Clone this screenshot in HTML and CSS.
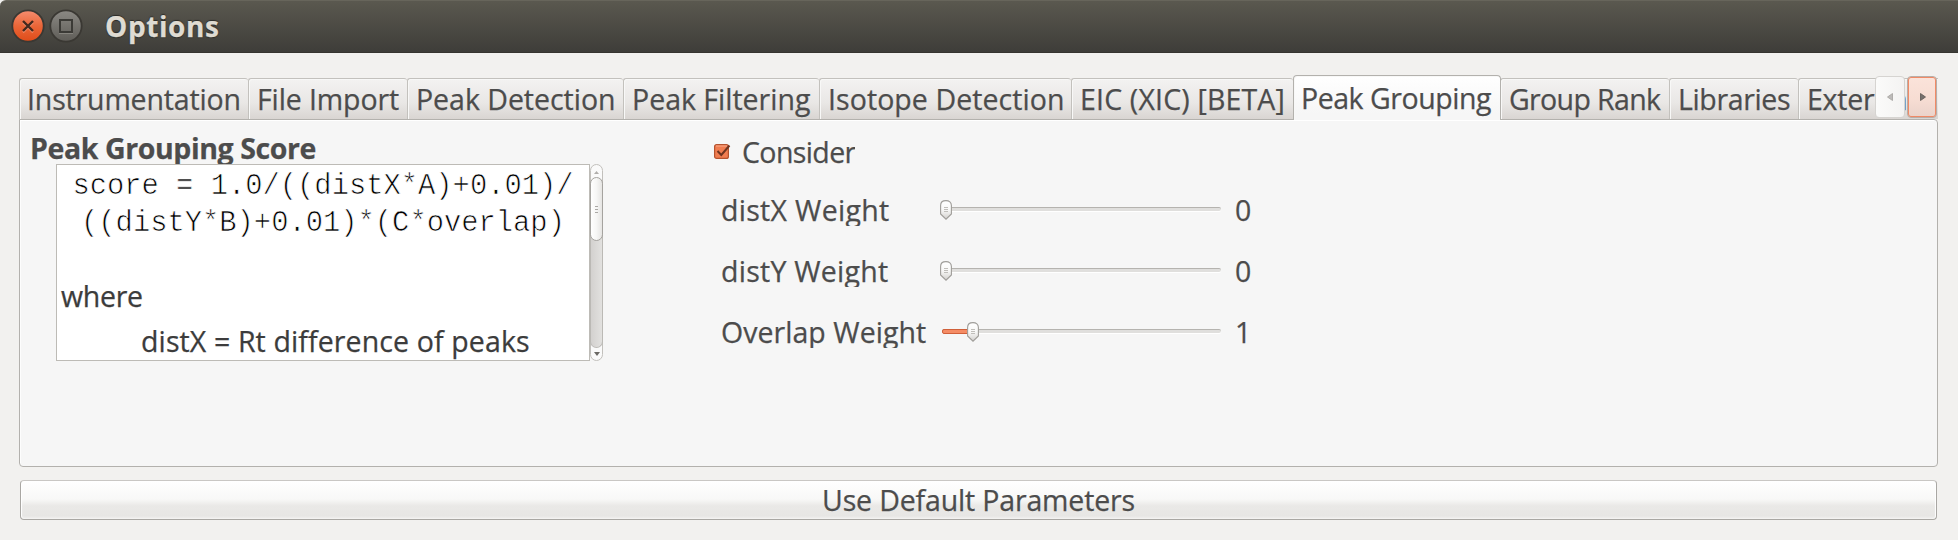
FILE: index.html
```
<!DOCTYPE html>
<html lang="en">
<head>
<meta charset="utf-8">
<title>Options</title>
<link rel="stylesheet" href="styles.css">
</head>
<body>
<svg class="defs" width="0" height="0" aria-hidden="true">
  <defs>
    <linearGradient id="close-fill" x1="0" y1="0" x2="0" y2="1"><stop offset="0" stop-color="#f58d70"/><stop offset=".5" stop-color="#ea6638"/><stop offset="1" stop-color="#df4b18"/></linearGradient>
    <linearGradient id="max-fill" x1="0" y1="0" x2="0" y2="1"><stop offset="0" stop-color="#8b8984"/><stop offset="1" stop-color="#5e5c57"/></linearGradient>
    <linearGradient id="knob-fill" x1="0" y1="0" x2="0" y2="1"><stop offset="0" stop-color="#ffffff"/><stop offset=".5" stop-color="#f8f8f7"/><stop offset="1" stop-color="#d2d0cd"/></linearGradient>
    <symbol id="knob" viewBox="0 0 12 20">
      <path d="M.6 5.500C.6 2.400 2.800.6 6 .6s5.400 1.800 5.400 4.900V14L6 19.200.6 14Z" fill="url(#knob-fill)" stroke="#9f9d99" stroke-width="1.100"/>
      <path d="M4 7.500h4M4 9.500h4M4 11.500h4" stroke="#c0beba" stroke-width="1"/>
    </symbol>
  </defs>
</svg>
<header class="titlebar">
  <svg class="window-buttons" width="74" height="36" viewBox="0 0 74 36">
    <circle cx="18" cy="18" r="15.700" fill="url(#close-fill)" stroke="#3a3833" stroke-width="1.800"/>
    <path d="M13 14.500l10 10M23 14.500l-10 10" stroke="#f39a7c" stroke-width="2" opacity=".7"/>
    <path d="M13 13l10 10M23 13l-10 10" stroke="#44291e" stroke-width="2.400"/>
    <circle cx="56" cy="18" r="15.700" fill="url(#max-fill)" stroke="#3a3833" stroke-width="1.800"/>
    <path d="M49 25.500h14" stroke="#86847e" stroke-width="1"/>
    <rect x="50" y="12" width="12" height="12" fill="none" stroke="#3b3a36" stroke-width="2"/>
  </svg>
  <h1 class="window-title">Options</h1>
</header>
<main class="content">
  <nav class="tabs">
    <div class="tab tab-instrumentation">Instrumentation</div>
    <div class="tab tab-import">File Import</div>
    <div class="tab tab-detection">Peak Detection</div>
    <div class="tab tab-filtering">Peak Filtering</div>
    <div class="tab tab-isotope">Isotope Detection</div>
    <div class="tab tab-eic">EIC (XIC) [BETA]</div>
    <div class="tab tab-grouping active">Peak Grouping</div>
    <div class="tab tab-rank">Group Rank</div>
    <div class="tab tab-libraries">Libraries</div>
    <div class="tab tab-external">External P</div>
    <div class="scrollers">
      <button class="scroller disabled"><svg width="6" height="8" viewBox="0 0 6 8"><path d="M5.500.5v7L.5 4Z" fill="#bdbbb9" stroke="#a3a19e" stroke-width=".8"/></svg></button>
      <button class="scroller hot"><svg width="6" height="8" viewBox="0 0 6 8"><path d="M.5.5v7l5-3.500Z" fill="#77716e" stroke="#5c5552" stroke-width=".8"/></svg></button>
    </div>
  </nav>
  <section class="panel">
    <div class="score">
      <h2 class="heading">Peak Grouping Score</h2>
      <div class="formula">
        <div class="formula-text">
          <p class="code">score = 1.0/((distX*A)+0.01)/</p>
          <p class="code">((distY*B)+0.01)*(C*overlap)</p>
          <p class="where">where</p>
          <p class="definition">distX = Rt difference of peaks</p>
        </div>
        <div class="scrollbar">
          <svg class="arrow arrow-up" width="5" height="3" viewBox="0 0 5 3"><path d="M0 3L2.500 0 5 3Z" fill="#b0aeab"/></svg>
          <div class="thumb"><i></i><i></i><i></i></div>
          <div class="trough"></div>
          <svg class="arrow arrow-down" width="6" height="4" viewBox="0 0 6 4"><path d="M0 0h6L3 4Z" fill="#6b6965"/></svg>
        </div>
      </div>
    </div>
    <div class="weights">
      <div class="consider">
        <svg width="17" height="17" viewBox="0 0 17 17">
          <rect x=".6" y="1.600" width="13.800" height="13.800" rx="2" fill="#f07d51" stroke="#b5532f" stroke-width="1.200"/>
          <path d="M2 3h11" stroke="#f8a98b" stroke-width="1"/>
          <path d="M3.500 8l3.800 4L15.500 2.500" fill="none" stroke="#6e3420" stroke-width="2"/>
        </svg>
        <span class="consider-label">Consider</span>
      </div>
      <div class="row">
        <span class="label label-x">distX Weight</span>
        <div class="slider"><div class="groove"></div><svg class="knob" width="12" height="20"><use href="#knob"/></svg></div>
        <span class="value">0</span>
      </div>
      <div class="row">
        <span class="label label-y">distY Weight</span>
        <div class="slider"><div class="groove"></div><svg class="knob" width="12" height="20"><use href="#knob"/></svg></div>
        <span class="value">0</span>
      </div>
      <div class="row">
        <span class="label label-overlap">Overlap Weight</span>
        <div class="slider"><div class="groove"></div><div class="fill"></div><svg class="knob knob-one" width="12" height="20"><use href="#knob"/></svg></div>
        <span class="value">1</span>
      </div>
    </div>
  </section>
  <button class="defaults">Use Default Parameters</button>
</main>
</body>
</html>
```
FILE: styles.css
```
* { box-sizing: border-box; }
body {
  margin: 0;
  width: 1958px;
  height: 540px;
  overflow: hidden;
  background: #f2f1ef;
  color: #4c4c4c;
  font-family: "Open Sans", "Noto Sans", sans-serif;
  font-size: 28.5px;
  white-space: nowrap;
  -webkit-text-stroke: .25px currentColor;
}
h1, h2, p { margin: 0; font-size: inherit; font-weight: inherit; }
button { font: inherit; color: inherit; }
svg { display: block; flex: none; }
.defs { position: absolute; }

.titlebar {
  display: flex;
  height: 53px;
  padding-left: 10px;
  border-top: 1px solid #67655b;
  border-bottom: 1px solid #363530;
  border-top-left-radius: 6px;
  background: linear-gradient(#5a584f, #3e3d39);
}
.window-buttons { margin-top: 7px; }
.window-title {
  margin-left: 21px;
  font-size: 28px;
  font-weight: bold;
  line-height: 50px;
  letter-spacing: .6px;
  color: #dfdbd2;
  text-shadow: 0 -1px 1px #2c2b28, 0 1px 1px #2c2b28;
}

.content { padding: 22px 20px 0 19px; }
.tabs {
  position: relative;
  z-index: 1;
  display: flex;
  align-items: flex-end;
  width: 1919px;
  height: 44px;
}
.tab {
  flex: none;
  height: 41px;
  padding-left: 8px;
  border: 1px solid #c3c1bd;
  border-width: 1px 0 0 1px;
  border-radius: 3px 3px 0 0;
  line-height: 40px;
  background: linear-gradient(#f3f2f1, #e9e7e5 60%, #d9d5d2);
  box-shadow: inset 1px 1px 0 #f8f8f7;
}
.tab.active {
  position: relative;
  height: 45px;
  margin: 0 -1px -1px 0;
  padding-left: 7px;
  border-color: #b3b1ad;
  border-right-width: 1px;
  border-radius: 4px 4px 0 0;
  line-height: 44px;
  background: linear-gradient(#fff, #f6f6f6 85%);
}
.tab-instrumentation { width: 229px; padding-left: 7px; letter-spacing: -.155px; }
.tab-import { width: 159px; letter-spacing: -.108px; }
.tab-detection { width: 216px; letter-spacing: -.027px; }
.tab-filtering { width: 196px; }
.tab-isotope { width: 252px; letter-spacing: .073px; }
.tab-eic { width: 222px; letter-spacing: .165px; }
.tab-grouping { width: 208px; letter-spacing: -.455px; }
.tab-rank { width: 169px; letter-spacing: -.637px; }
.tab-libraries { width: 129px; letter-spacing: -.355px; }
.tab-external {
  width: 140px;
  overflow: hidden;
  border-top-right-radius: 0;
  letter-spacing: -.229px;
  word-spacing: -4px;
}
.scrollers {
  position: absolute;
  right: 1px;
  top: 1px;
  display: flex;
  gap: 2px;
}
.scroller {
  display: flex;
  align-items: center;
  justify-content: center;
  width: 30px;
  height: 42px;
  padding: 0;
  border: 1px solid #d6d4d1;
  border-radius: 4px;
  background: linear-gradient(90deg, #fbfbfa, #f4f3f2);
}
.scroller.hot {
  border-color: #b9aea8;
  background: linear-gradient(#fbe3da, #f7ddd3 55%, #ead3ca);
  box-shadow: inset 0 0 0 1px #f08a66;
}
.hot svg { margin-left: 2px; }

.panel {
  display: flex;
  width: 1919px;
  height: 348px;
  border: 1px solid #b3b1ad;
  border-radius: 0 4px 4px 4px;
  background: #f6f6f6;
  box-shadow: inset 0 1px 0 #fff, inset 1px 0 0 #fdfdfd;
}
.score { width: 583px; padding-left: 9px; }
.heading {
  height: 44px;
  padding: 8px 0 0 1px;
  font-weight: bold;
  line-height: 40px;
  letter-spacing: -.41px;
}
.formula { display: flex; height: 197px; margin-left: 27px; }
.formula-text {
  width: 534px;
  padding: 3px 0 0 4px;
  overflow: hidden;
  border: 1px solid #bdbbb6;
  background: #fff;
  color: #3c3c3c;
}
.code {
  margin-left: -4px;
  text-align: center;
  font: 28.8px/37px "Liberation Mono", monospace;
  color: #000;
  -webkit-text-stroke: .7px #fff;
}
.where { margin-top: 35px; line-height: 38px; letter-spacing: -.3px; }
.definition { margin-top: 7px; padding-left: 80px; line-height: 38px; letter-spacing: .122px; }

.scrollbar {
  display: flex;
  flex-direction: column;
  align-items: center;
  width: 13px;
  height: 197px;
  border: 1px solid #c2c0bc;
  border-radius: 7px;
  background: #fafafa;
}
.arrow-up { margin: 6px 0 3px; }
.thumb {
  position: relative;
  display: flex;
  flex-direction: column;
  align-items: center;
  justify-content: center;
  gap: 2px;
  flex: none;
  width: 13px;
  height: 64px;
  border: 1px solid #a5a39f;
  border-radius: 7px;
  background: linear-gradient(90deg, #fff, #f6f6f5 50%, #e6e5e3);
}
.thumb i { width: 3px; height: 1px; background: #aaa8a5; }
.trough {
  width: 13px;
  height: 115px;
  margin-top: -8px;
  border: 1px solid #bbb9b5;
  border-top: 0;
  border-radius: 0 0 7px 7px;
  background: linear-gradient(90deg, #d3d1cf, #e2e1df);
}
.arrow-down { margin-top: 4px; }

.weights { padding: 23px 0 0 111px; }
.consider { display: flex; align-items: center; height: 40px; margin-top: -11px; }
.consider svg { margin-top: -1px; }
.consider-label {
  width: 113px;
  margin-left: 11px;
  overflow: hidden;
  line-height: 40px;
  letter-spacing: -.6px;
}
.row { display: flex; height: 36px; margin: 18px 0 25px 7px; }
.row + .row { margin-top: 25px; }
.label { width: 219px; height: 36px; overflow: hidden; line-height: 40px; }
.label-x { letter-spacing: .3px; }
.label-y { letter-spacing: .257px; }
.label-overlap { letter-spacing: .047px; }
.slider { position: relative; width: 295px; }
.groove {
  width: 279px;
  height: 4px;
  margin: 17px 0 0 2px;
  border-top: 1px solid #b5b3af;
  border-radius: 2px;
  background: #e0dfdd;
  box-shadow: 0 1px 0 #fff;
}
.fill {
  position: absolute;
  left: 2px;
  top: 17px;
  width: 28px;
  height: 5px;
  border: 1px solid #d0603a;
  border-radius: 2px;
  background: #f58c65;
}
.knob { position: absolute; left: 0; top: 10px; }
.knob-one { left: 27px; }
.value { line-height: 40px; }

.defaults {
  display: block;
  width: 1917px;
  height: 40px;
  margin: 13px 0 0 1px;
  padding: 0;
  border: 1px solid #a9a7a3;
  border-top-color: #c9c7c4;
  border-radius: 4px;
  background: linear-gradient(#fff, #f8f8f7 48%, #eae9e7 65%, #e7e6e4 92%, #f3f2f1);
  line-height: 38px;
  letter-spacing: -.156px;
  box-shadow: inset 1px 0 1px #fff, inset -1px 0 1px #fff;
}
```
